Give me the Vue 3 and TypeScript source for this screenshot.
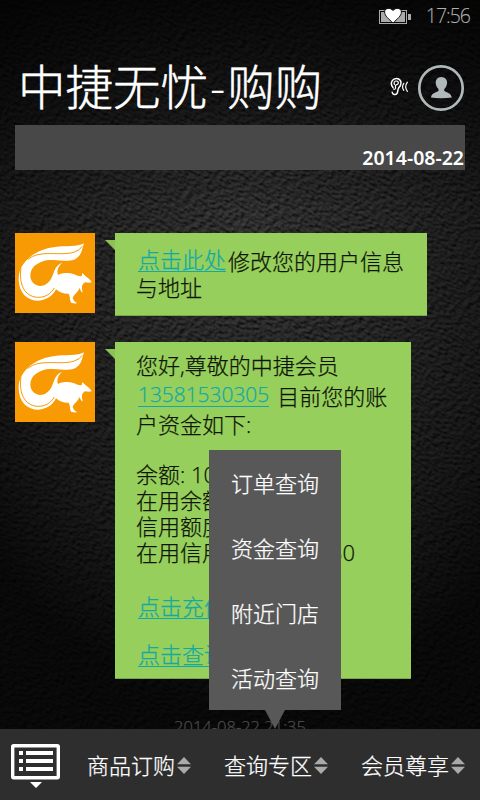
<script setup lang="ts">
interface Segment {
  text: string
  link?: boolean
}
interface Line {
  id: string
  segments: Segment[]
}
interface Message {
  id: string
  lines: Line[]
}

const messages: Message[] = [
  {
    id: 'profile',
    lines: [
      { id: 'edit', segments: [{ text: '点击此处', link: true }, { text: '修改您的用户信息' }] },
      { id: 'address', segments: [{ text: '与地址' }] },
    ],
  },
  {
    id: 'account',
    lines: [
      { id: 'greeting', segments: [{ text: '您好,尊敬的中捷会员' }] },
      { id: 'phone', segments: [{ text: '13581530305', link: true }, { text: '目前您的账' }] },
      { id: 'funds', segments: [{ text: '户资金如下:' }] },
      { id: 'balance', segments: [{ text: '余额: 10' }] },
      { id: 'used', segments: [{ text: '在用余额' }] },
      { id: 'credit', segments: [{ text: '信用额度' }] },
      { id: 'creditused', segments: [{ text: '在用信用' }, { text: '30' }] },
      { id: 'recharge', segments: [{ text: '点击充值', link: true }] },
      { id: 'query', segments: [{ text: '点击查询', link: true }] },
    ],
  },
]

const popupItems: string[] = ['订单查询', '资金查询', '附近门店', '活动查询']
const tabs: string[] = ['商品订购', '查询专区', '会员尊享']
</script>

<template>
  <div class="screen">
    <svg class="leather" width="480" height="800" aria-hidden="true">
      <defs>
        <filter id="grain" x="0" y="0" width="100%" height="100%" color-interpolation-filters="sRGB">
          <feTurbulence type="fractalNoise" baseFrequency="0.2 0.34" numOctaves="5" seed="21" result="n" />
          <feDiffuseLighting in="n" surfaceScale="1.9" diffuseConstant="0.7" lighting-color="#ffffff">
            <feDistantLight azimuth="215" elevation="44" />
          </feDiffuseLighting>
        </filter>
        <radialGradient id="glow" gradientUnits="userSpaceOnUse" cx="0" cy="0" r="1" gradientTransform="translate(250 235) scale(350 470)">
          <stop offset="0" stop-color="#000" stop-opacity="0.62" />
          <stop offset="0.4" stop-color="#000" stop-opacity="0.71" />
          <stop offset="0.75" stop-color="#000" stop-opacity="0.82" />
          <stop offset="1" stop-color="#000" stop-opacity="0.93" />
        </radialGradient>
        <linearGradient id="topshade" x1="0" y1="0" x2="0" y2="1">
          <stop offset="0" stop-color="#000" stop-opacity="0.75" />
          <stop offset="0.5" stop-color="#000" stop-opacity="0.45" />
          <stop offset="1" stop-color="#000" stop-opacity="0" />
        </linearGradient>
      </defs>
      <g transform="rotate(32 240 400)">
        <rect x="-240" y="-120" width="960" height="1040" filter="url(#grain)" />
      </g>
      <rect width="480" height="800" fill="url(#glow)" />
      <rect width="480" height="210" fill="url(#topshade)" />
    </svg>

    <div class="status">
      <svg class="battery" width="33" height="18" viewBox="0 0 33 18">
        <rect x="0.5" y="3.5" width="27" height="13" fill="none" stroke="#aaa" />
        <rect x="2" y="5" width="24" height="10" fill="#aaa" />
        <rect x="29" y="7" width="3" height="6" fill="#aaa" />
        <path d="M14 16 C10 12 5.6 9 5.6 5 C5.6 .8 11.5 .2 14 3.6 C16.5 .2 22.4 .8 22.4 5 C22.4 9 18 12 14 16Z" fill="#fff" stroke="#111" stroke-width="1" />
      </svg>
      <span class="clock">17:56</span>
    </div>

    <header class="header">
      <h1 class="title">中捷无忧<span class="dash">-</span>购购</h1>
      <svg class="ear" width="19" height="20" viewBox="0 0 19 20" fill="none" stroke="#fff" stroke-linecap="round">
        <path d="M3 10.5 C1.2 8.3 1 5.5 2.3 3.6 C4 1 8.5 .8 10.3 3.5 C12.2 6.5 10.2 9.2 8.6 11.1 C7.5 12.6 8.2 14.5 7 16.5 C5.7 18.4 2.4 17.7 2.2 15.2" stroke-width="1.5" />
        <path d="M4.4 7.5 C3.4 5.5 4.6 4 6.3 4 C8 4 8.8 5.5 8.1 6.8 C7.5 8 6.1 7.3 5.5 8.4 C5 9.5 6.2 10.4 5.3 11.7 C4.9 12.4 4.1 12.4 3.5 12" stroke-width="1.2" />
        <path d="M13.8 6.3 Q11.3 9.8 13.8 13.3 M17.4 5.2 Q14 9.8 17.4 14.3" stroke-width="1.2" />
      </svg>
      <svg class="user" width="48" height="48" viewBox="0 0 48 48">
        <circle cx="24" cy="24" r="21.7" fill="none" stroke="#afb9ba" stroke-width="2.7" />
        <path d="M24.3 13 C28 13 30.3 15.8 30.1 19 C29.9 21.5 29 23.4 27.3 25 V27 C29.5 28.8 34 28.7 34.8 33.6 Q30 34.2 24.3 34.2 Q18.5 34.2 14 33.6 C14.5 28.7 19.2 28.8 21.5 27 V25 C19.8 23.4 18.9 21.5 18.7 19 C18.5 15.8 20.7 13 24.3 13Z" fill="#afb9ba" />
      </svg>
    </header>

    <div class="date">2014-08-22</div>

    <main class="chat">
      <article v-for="m in messages" :key="m.id" class="message">
        <svg class="avatar" width="80" height="80" viewBox="0 0 240 240">
          <rect width="240" height="240" fill="#f79a03" />
          <path d="M207 31 C186 43 151 38 120 42 C65 48 12 83 11 137 C11 180 37 203 70 203 C95 202 113 189 123 169 C137 181 151 183 161 182 C166 189 163 198 168 209 Q176 212 186 211 Q176 206 173 196 C175 185 187 181 194 165 C196 170 197 176 203 179 Q200 168 201 158 C206 152 207 148 211 148 Q221 150 230 148 C229 142 218 135 212 130 L202 120 L200 129 C188 132 176 119 157 120 C145 120 136 122 129 126 C124 113 130 98 142 89 C122 96 119 111 113 127 C106 147 91 160 74 159 C57 157 46 145 46 127 C47 103 66 89 94 82 C132 76 169 93 188 73 C201 63 202 45 207 31Z" fill="#fff" />
          <path d="M18 105 C11 153 28 190 67 193 C91 194 108 182 118 165 M38 80 C74 48 136 71 178 57 Q194 52 202 40" fill="none" stroke="#f79a03" stroke-width="3" />
        </svg>
        <div class="bubble" :class="m.id">
          <p v-for="l in m.lines" :key="l.id" class="line" :class="l.id">
            <span v-for="(s, i) in l.segments" :key="i" :class="s.link ? 'link' : 'plain'">{{ s.text }}</span>
          </p>
        </div>
      </article>
      <div class="stamp">2014-08-22 21:35</div>
    </main>

    <footer class="bar">
      <svg class="keyboard" width="50" height="46" viewBox="0 0 50 46">
        <rect x="1.7" y="1.7" width="45.6" height="32.1" rx="1" fill="none" stroke="#fff" stroke-width="3.4" />
        <path d="M8 7h4v4H8z M15 7h27v4H15z M8 15h4v4H8z M15 15h27v4H15z M8 23h4v4H8z M15 23h27v4H15z M19 38h12l-6 6z" fill="#fff" />
      </svg>
      <button v-for="t in tabs" :key="t" class="tab">
        <span class="label">{{ t }}</span>
        <svg width="14" height="17" viewBox="0 0 14 17"><path d="M0 7.3 L7 0 L14 7.3Z M0 9.7 L7 17 L14 9.7Z" fill="#aaa" /></svg>
      </button>
    </footer>

    <nav class="popup">
      <a v-for="p in popupItems" :key="p" class="item">{{ p }}</a>
    </nav>
  </div>
</template>

<style>
body {
  background: #080808;
}
</style>

<style scoped>
.screen {
  position: relative;
  isolation: isolate;
  display: flex;
  flex-direction: column;
  width: 480px;
  height: 800px;
  overflow: hidden;
  color: #fff;
  font-family: "Open Sans", "Noto Sans CJK SC", sans-serif;
  font-weight: 300;
  -webkit-text-stroke: 0.25px currentColor;
}
.leather {
  position: absolute;
  inset: 0;
  z-index: -1;
}
.status {
  display: flex;
  flex: none;
  justify-content: flex-end;
  height: 32px;
  padding-right: 10px;
}
.battery {
  margin: 7px 14px 0 0;
}
.clock {
  color: #b0b0b0;
  font-size: 19.5px;
  letter-spacing: -1px;
  line-height: 31px;
  -webkit-text-stroke-width: 0.1px;
}
.header {
  display: flex;
  flex: none;
  align-items: flex-start;
  box-sizing: border-box;
  height: 93px;
  padding: 0 15px 0 18px;
}
.title {
  flex: 1;
  margin: 0;
  padding-top: 20px;
  font-size: 47.5px;
  font-weight: 300;
  line-height: 70px;
  white-space: nowrap;
  -webkit-text-stroke-width: 0.5px;
}
.dash {
  margin: 0 2px;
  -webkit-text-stroke-width: 0;
}
.ear {
  margin: 45px 8px 0 0;
}
.user {
  margin-top: 32px;
}
.date {
  display: flex;
  flex: none;
  align-items: flex-end;
  justify-content: flex-end;
  box-sizing: border-box;
  height: 45px;
  margin: 0 15px;
  padding-right: 1px;
  background: #484848;
  font-family: "Noto Sans", sans-serif;
  font-size: 19.5px;
  font-weight: 600;
  line-height: 24px;
  -webkit-text-stroke-width: 0;
}
.chat {
  display: flex;
  flex: 1;
  flex-direction: column;
  gap: 26px;
  min-height: 0;
  padding: 63px 15px 0;
  overflow: hidden;
}
.message {
  display: flex;
  flex: none;
  align-items: flex-start;
  gap: 20px;
}
.bubble {
  position: relative;
  box-sizing: border-box;
  padding-left: 21px;
  border-bottom: 1px solid #7ba64f;
  background: #96cf5b;
  color: #101408;
  font-size: 22px;
}
.bubble::before {
  content: "";
  position: absolute;
  top: 7px;
  left: -10px;
  width: 10px;
  height: 10px;
  background: #8cc157;
  clip-path: polygon(0 0, 100% 0, 100% 100%);
}
.profile {
  width: 312px;
  height: 83px;
  padding-top: 14px;
}
.account {
  width: 296px;
  height: 337px;
  padding-top: 9px;
}
.line {
  display: flex;
  align-items: center;
  height: 26px;
  margin: 0;
  line-height: 26px;
  white-space: pre;
}
.link {
  height: 24px;
  margin: -3px 2px 0;
  border-bottom: 1px solid #12a9a6;
  color: #12a9a6;
  line-height: 24px;
}
.edit {
  height: 28px;
}
.address {
  height: 24px;
}
.greeting {
  height: 28px;
}
.phone {
  height: 33px;
}
.phone .link {
  margin-right: 8px;
  font-size: 20.9px;
}
.phone .plain {
  padding-top: 1px;
}
.funds {
  height: 24px;
  margin-bottom: 25px;
}
.creditused {
  margin-bottom: 30px;
}
.creditused .plain + .plain {
  margin-left: 106px;
}
.recharge {
  margin-bottom: 22px;
}
.stamp {
  flex: none;
  margin-top: 10px;
  color: #4c4c4c;
  font-size: 16.5px;
  line-height: 24px;
  text-align: center;
}
.bar {
  display: flex;
  flex: none;
  height: 71px;
  padding: 0 15px 0 11px;
  background: #2e2e2e;
}
.keyboard {
  flex: none;
  margin: 15px 26px 0 0;
}
.tab {
  display: flex;
  flex: none;
  align-items: center;
  gap: 2px;
  width: 137px;
  padding: 0;
  border: 0;
  background: none;
  color: #fff;
  font: inherit;
  font-size: 22px;
  white-space: nowrap;
}
.tab:last-child {
  width: 105px;
}
.label {
  padding-bottom: 2px;
}
.tab svg {
  flex: none;
  margin-top: 2px;
}
.popup {
  position: absolute;
  top: 450px;
  left: 209px;
  display: flex;
  flex-direction: column;
  width: 132px;
  height: 260px;
  background: #585858;
}
.popup::after {
  content: "";
  position: absolute;
  top: 260px;
  left: 56px;
  width: 20px;
  height: 19px;
  background: #585858;
  clip-path: polygon(0 0, 100% 0, 50% 100%);
}
.item {
  height: 65px;
  font-size: 22px;
  line-height: 66px;
  text-align: center;
}
</style>
